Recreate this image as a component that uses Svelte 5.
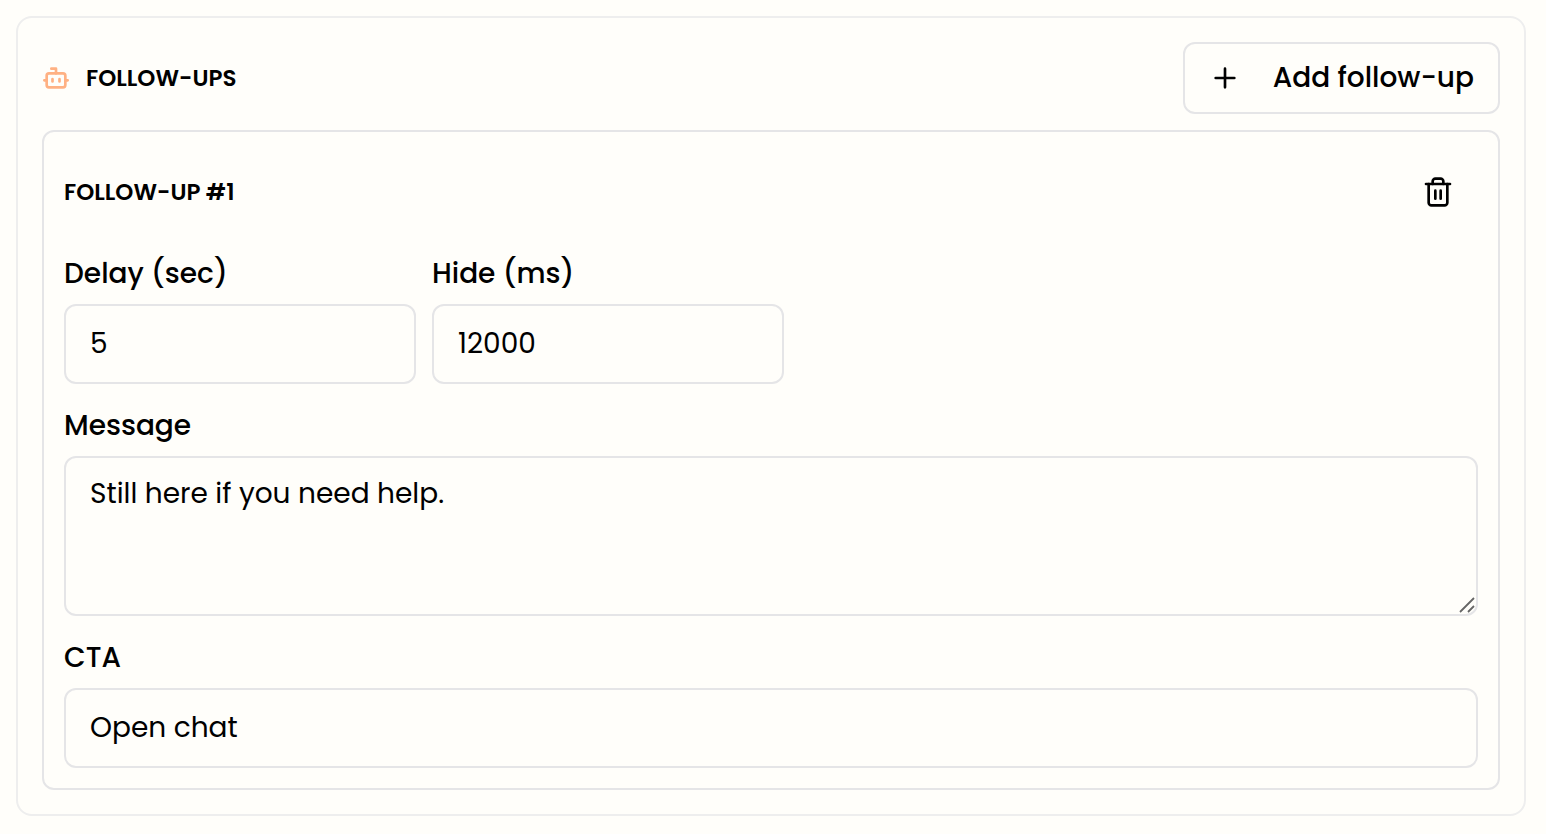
<script>
    let nextId = 2;
    let followUps = [
        { id: 1, delay: 5, hide: 12000, message: "Still here if you need help.", cta: "Open chat" }
    ];

    function addFollowUp() {
        followUps = [...followUps, { id: nextId++, delay: 5, hide: 12000, message: "", cta: "" }];
    }

    const removeFollowUp = (id) => () => {
        followUps = followUps.filter((item) => item.id !== id);
    }
</script>

<section class="panel">
    <header class="panel-header">
        <div class="title">
            <svg class="icon bot" viewBox="0 0 24 24" aria-hidden="true">
                <path d="M12 8V4H8" />
                <rect width="16" height="12" x="4" y="8" rx="2" />
                <path d="M2 14h2M20 14h2M15 13v2M9 13v2" />
            </svg>
            <h2>FOLLOW-UPS</h2>
        </div>
        <button type="button" class="add" on:click={addFollowUp}>
            <svg class="icon" viewBox="0 0 24 24" aria-hidden="true">
                <path d="M5 12h14M12 5v14" />
            </svg>
            Add follow-up
        </button>
    </header>

    {#each followUps as item, i (item.id)}
        <div class="card">
            <div class="card-header">
                <h3>FOLLOW-UP #{i + 1}</h3>
                <button type="button" class="remove" aria-label="Remove follow-up" on:click={removeFollowUp(item.id)}>
                    <svg class="icon" viewBox="0 0 24 24" aria-hidden="true">
                        <path d="M3 6h18" />
                        <path d="M19 6v14c0 1-1 2-2 2H7c-1 0-2-1-2-2V6" />
                        <path d="M8 6V4c0-1 1-2 2-2h4c1 0 2 1 2 2v2" />
                        <path d="M10 11v6M14 11v6" />
                    </svg>
                </button>
            </div>

            <div class="timing">
                <div class="field">
                    <label for="delay-{item.id}">Delay (sec)</label>
                    <input id="delay-{item.id}" type="number" bind:value={item.delay} />
                </div>
                <div class="field">
                    <label for="hide-{item.id}">Hide (ms)</label>
                    <input id="hide-{item.id}" type="number" bind:value={item.hide} />
                </div>
            </div>

            <div class="field">
                <label for="message-{item.id}">Message</label>
                <div class="textarea-wrap">
                    <textarea id="message-{item.id}" bind:value={item.message}></textarea>
                    <svg class="grip" viewBox="0 0 16 16" aria-hidden="true">
                        <path d="M1 15L15 1M9 15l6-6" />
                    </svg>
                </div>
            </div>

            <div class="field">
                <label for="cta-{item.id}">CTA</label>
                <input id="cta-{item.id}" type="text" bind:value={item.cta} />
            </div>
        </div>
    {/each}
</section>

<style>
    :global(body) {
        background: #fffefa;
        color: #000;
        font-family: Poppins, Inter, sans-serif;
        font-size: 28px;
        line-height: 40px;
    }

    .panel, .card, button, input, textarea {
        box-sizing: border-box;
    }

    .panel {
        display: flex;
        flex-direction: column;
        gap: 16px;
        margin: 16px 20px 16px 16px;
        padding: 24px;
        border: 2px solid #eeeeee;
        border-radius: 16px;
    }

    .panel-header, .card-header {
        display: flex;
        align-items: center;
        justify-content: space-between;
    }

    .title {
        display: flex;
        align-items: center;
        gap: 16px;
    }

    h2, h3 {
        margin: 0;
        font-size: 23px;
        font-weight: 600;
        line-height: 32px;
    }

    .icon {
        width: 32px;
        height: 32px;
        fill: none;
        stroke: currentColor;
        stroke-width: 2;
        stroke-linecap: round;
        stroke-linejoin: round;
    }
    .bot {
        width: 28px;
        height: 28px;
        color: #ffb183;
        stroke-width: 2.3;
    }

    button {
        display: flex;
        align-items: center;
        justify-content: center;
        background: transparent;
        color: inherit;
        font: inherit;
        cursor: pointer;
    }
    .add {
        gap: 32px;
        height: 72px;
        padding: 0 24px;
        border: 2px solid #e5e5e7;
        border-radius: 12px;
        font-weight: 500;
    }
    .remove {
        width: 80px;
        height: 80px;
        padding: 0;
        border: none;
    }

    .card {
        display: flex;
        flex-direction: column;
        gap: 16px;
        padding: 20px;
        border: 2px solid #e5e5e7;
        border-radius: 12px;
    }

    .timing {
        display: flex;
        flex-wrap: wrap;
        gap: 16px;
    }
    .timing .field {
        width: 352px;
    }

    .field {
        display: flex;
        flex-direction: column;
        gap: 4px;
    }
    label {
        font-weight: 500;
        line-height: 52px;
    }

    input, textarea {
        display: block;
        width: 100%;
        margin: 0;
        border: 2px solid #e5e5e7;
        border-radius: 12px;
        background: transparent;
        color: inherit;
        font: inherit;
        outline: none;
    }
    input {
        height: 80px;
        padding: 0 24px;
        appearance: textfield;
    }
    textarea {
        height: 160px;
        padding: 16px 24px;
        resize: vertical;
    }
    textarea::-webkit-resizer {
        display: none;
    }
    input:focus-visible, textarea:focus-visible {
        border-color: #ffb183;
    }

    .textarea-wrap {
        position: relative;
    }
    .grip {
        position: absolute;
        right: 3px;
        bottom: 3px;
        width: 16px;
        height: 16px;
        fill: none;
        stroke: #666;
        stroke-width: 1.8;
        pointer-events: none;
    }
</style>
